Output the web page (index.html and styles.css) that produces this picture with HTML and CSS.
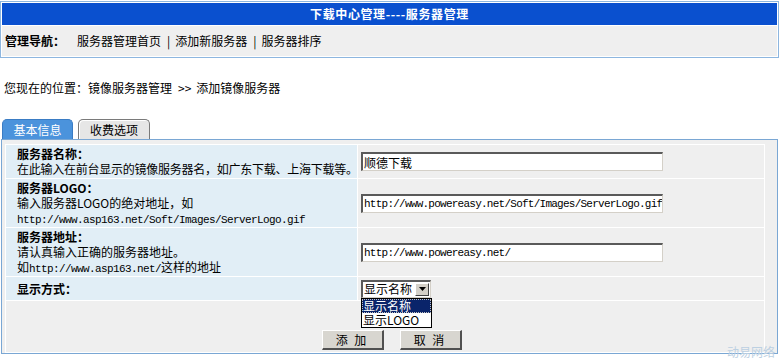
FILE: index.html
```html
<!DOCTYPE html>
<html lang="zh">
<head>
<meta charset="utf-8">
<title>服务器管理</title>
<link rel="stylesheet" href="styles.css">
</head>
<body>
<div class="page">
  <div class="topbox">
    <div class="title">下载中心管理----服务器管理</div>
    <div class="nav"><b class="navlabel">管理导航：</b><span class="links">服务器管理首页<span class="sep">|</span>添加新服务器<span class="sep">|</span>服务器排序</span></div>
  </div>
  <div class="crumb">您现在的位置：镜像服务器管理<span class="gt">&gt;&gt;</span>添加镜像服务器</div>
  <div class="tabs">
    <div class="tab tab-on">基本信息</div>
    <div class="tab tab-off">收费选项</div>
  </div>
  <div class="panel">
    <div class="form">
      <div class="lab r1"><b>服务器名称：</b><br><span class="tight">在此输入在前台显示的镜像服务器名，如广东下载、上海下载等。</span></div>
      <div class="fld r1"><input class="txt cjk" type="text" value="顺德下载"></div>

      <div class="lab r2"><b>服务器LOGO：</b><br>输入服务器LOGO的绝对地址，如<br><span class="mono">http://www.asp163.net/Soft/Images/ServerLogo.gif</span></div>
      <div class="fld r2"><input class="txt mono" type="text" value="http://www.powereasy.net/Soft/Images/ServerLogo.gif"></div>

      <div class="lab r3"><b>服务器地址：</b><br>请认真输入正确的服务器地址。<br>如<span class="mono">http://www.asp163.net/</span>这样的地址</div>
      <div class="fld r3"><input class="txt mono" type="text" value="http://www.powereasy.net/"></div>

      <div class="lab r4"><b>显示方式：</b></div>
      <div class="fld r4">
        <div class="select">
          <span class="sel-val">显示名称</span><span class="sel-btn"><svg width="7" height="4" viewBox="0 0 7 4"><path d="M0 0H7L3.5 4Z" fill="#000"/></svg></span>
          <div class="dropdown">
            <div class="opt opt-on">显示名称</div>
            <div class="opt">显示LOGO</div>
          </div>
        </div>
      </div>

      <div class="btnrow">
        <button class="btn" type="button">添 加</button>
        <button class="btn" type="button">取 消</button>
      </div>
    </div>
  </div>
  <div class="mark">动易网络</div>
</div>
</body>
</html>
```
FILE: styles.css
```css
html, body {
  margin: 0;
  padding: 0;
  background: #fff;
}
body {
  font-family: "Noto Sans CJK SC", "Liberation Sans", sans-serif;
  font-size: 12px;
  line-height: 15px;
  color: #000;
}
.page {
  position: relative;
  width: 780px;
  height: 359px;
  overflow: hidden;
}
.topbox {
  margin-top: 1px;
  width: 779px;
  box-sizing: border-box;
  border: 1px solid #8db6df;
  padding: 1px;
  background: #fff;
  display: flex;
  flex-direction: column;
  gap: 1px;
}
.title {
  height: 22px;
  line-height: 22px;
  background: #0a50cf;
  color: #fff;
  font-weight: bold;
  text-align: center;
  letter-spacing: 0.6px;
}
.nav {
  height: 30px;
  line-height: 30px;
  background: #efefef;
  padding-left: 3px;
  display: flex;
}
.navlabel {
  width: 72px;
}
.sep {
  margin: 0 5px 0 6px;
}
.crumb {
  margin: 22px 0 0 4px;
  height: 15px;
}
.gt {
  margin: 0 5px 0 6px;
}
.tabs {
  margin: 24px 0 0 2px;
  display: flex;
  gap: 5px;
  height: 20px;
}
.tab {
  box-sizing: border-box;
  height: 20px;
  line-height: 19px;
  text-align: center;
  border-radius: 5px 5px 0 0;
}
.tab-on {
  width: 71px;
  background: #4b93dc;
  color: #fff;
  border: 1px solid #3a7cc4;
  border-bottom: none;
}
.tab-off {
  width: 72px;
  background: #e6e6e6;
  color: #000;
  border: 1px solid #7a7a7a;
  border-bottom: none;
  box-shadow: inset 1px 1px #fff;
}
.panel {
  margin-left: 1px;
  width: 777px;
  box-sizing: border-box;
  border: 1px solid #7aa7d4;
  background: #efefef;
  padding: 4px 0 0 3px;
}
.form {
  width: 760px;
  box-sizing: border-box;
  display: grid;
  grid-template-columns: 351px 406px;
  gap: 1px;
  padding: 1px;
  background: #fff;
}
.lab {
  background: #e1eef6;
  padding: 1px 0 0 11px;
  white-space: nowrap;
  box-sizing: border-box;
  overflow: hidden;
}
.tight {
  letter-spacing: -0.25px;
}
.fld {
  background: #efefef;
  display: flex;
  align-items: center;
  padding-left: 3px;
}
.r1 { height: 33px; }
.r2, .r3 { height: 48px; }
.r4 { height: 23px; }
.lab.r4 {
  display: flex;
  align-items: center;
  padding-top: 0;
}
.lab b { font-weight: bold; }
.mono {
  font-family: "Liberation Mono", "DejaVu Sans Mono", monospace;
  font-size: 11px;
  letter-spacing: -0.6px;
}
.txt {
  box-sizing: border-box;
  width: 302px;
  height: 19px;
  margin: 0;
  padding: 0 0 0 1px;
  background: #fff;
  color: #000;
  border-style: solid;
  border-width: 2px 1px 1px 2px;
  border-color: #5a5a5a #d4d0c8 #d4d0c8 #5a5a5a;
  outline: none;
}
.txt.mono {
  letter-spacing: -0.75px;
}
.txt.cjk {
  font-family: "Noto Sans CJK SC", sans-serif;
  font-size: 12px;
}
.select {
  position: relative;
  box-sizing: border-box;
  width: 70px;
  height: 18px;
  display: flex;
  align-items: center;
  justify-content: space-between;
  background: #fff;
  border-style: solid;
  border-width: 2px 1px 1px 2px;
  border-color: #5a5a5a #d4d0c8 #d4d0c8 #5a5a5a;
  padding-left: 1px;
}
.sel-val {
  font-size: 12px;
  line-height: 14px;
}
.sel-btn {
  width: 14px;
  height: 13px;
  box-sizing: border-box;
  background: #d4d0c8;
  border-style: solid;
  border-width: 1px;
  border-color: #fff #404040 #404040 #fff;
  display: flex;
  align-items: center;
  justify-content: center;
  margin-right: 1px;
}
.dropdown {
  position: absolute;
  left: -2px;
  top: 16px;
  width: 71px;
  box-sizing: border-box;
  border: 1px solid #000;
  background: #fff;
}
.opt {
  height: 14px;
  line-height: 14px;
  padding-left: 1px;
  box-sizing: border-box;
  font-size: 12px;
}
.opt-on {
  background: #0a246a;
  color: #fff;
  outline: 1px dotted #c0c0c0;
  outline-offset: -1px;
}
.btnrow {
  grid-column: 1 / 3;
  background: #efefef;
  height: 51px;
  display: flex;
  justify-content: center;
  align-items: flex-end;
  gap: 16px;
  padding: 0 0 2px 13px;
  box-sizing: border-box;
}
.btn {
  width: 62px;
  height: 20px;
  margin: 0;
  padding: 0;
  font-family: "Noto Sans CJK SC", sans-serif;
  font-size: 12px;
  color: #000;
  background: #d8d6d0;
  border-style: solid;
  border-width: 1px 2px 2px 1px;
  border-color: #fff #505050 #505050 #fff;
  letter-spacing: 2px;
}
.mark {
  position: absolute;
  right: 5px;
  bottom: 0;
  font-size: 12px;
  line-height: 15px;
  color: #bcd0e2;
}
```
